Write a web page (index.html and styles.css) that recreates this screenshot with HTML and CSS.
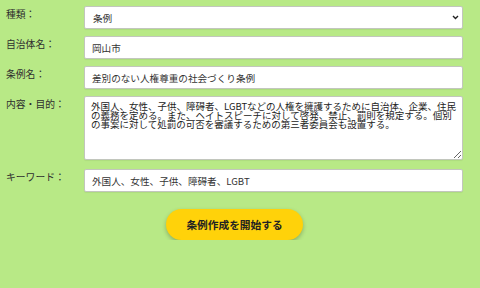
FILE: index.html
```html
<!DOCTYPE html>
<html lang="ja">
<head>
<meta charset="utf-8">
<title>条例作成</title>
<link rel="stylesheet" href="styles.css">
</head>
<body>
<form class="form">
  <div class="row">
    <label class="label">種類：</label>
    <div class="select-wrap">
      <select class="control select"><option>条例</option></select>
      <svg class="chev" width="7" height="5" viewBox="0 0 7 5"><path d="M1 1 L3.5 3.5 L6 1" fill="none" stroke="#222" stroke-width="1.4"/></svg>
    </div>
  </div>
  <div class="row">
    <label class="label">自治体名：</label>
    <input class="control" type="text" value="岡山市">
  </div>
  <div class="row">
    <label class="label">条例名：</label>
    <input class="control" type="text" value="差別のない人権尊重の社会づくり条例">
  </div>
  <div class="row">
    <label class="label">内容・目的：</label>
    <textarea class="control area">外国人、女性、子供、障碍者、LGBTなどの人権を擁護するために自治体、企業、住民の義務を定める。また、ヘイトスピーチに対して啓発、禁止、罰則を規定する。個別の事案に対して処罰の可否を審議するための第三者委員会も設置する。</textarea>
  </div>
  <div class="row row-key">
    <label class="label">キーワード：</label>
    <input class="control" type="text" value="外国人、女性、子供、障碍者、LGBT">
  </div>
  <div class="actions">
    <button class="submit" type="button">条例作成を開始する</button>
  </div>
</form>
</body>
</html>
```

FILE: styles.css
```css
body {
  margin: 0;
  background: #b8e986;
  font-family: "Noto Sans CJK JP", "Noto Sans", sans-serif;
  color: #333;
}
.form {
  display: flex;
  flex-direction: column;
  gap: 7px;
  padding: 6px 17px 0 6px;
}
.row {
  display: grid;
  grid-template-columns: 78px 1fr;
}
.row-key {
  margin-top: 2px;
}
.label {
  font-size: 9.8px;
  line-height: 14px;
  padding-top: 1px;
  color: #2e2e2e;
}
.control {
  display: block;
  width: 100%;
  box-sizing: border-box;
  height: 23px;
  margin: 0;
  padding: 0 7px;
  border: 1px solid #c2c6bd;
  border-radius: 2px;
  background: #fff;
  font-family: inherit;
  font-size: 9.6px;
  color: #333;
  box-shadow: 0 1px 1px rgba(0, 0, 0, 0.06);
}
.select-wrap {
  position: relative;
}
.select {
  appearance: none;
  -webkit-appearance: none;
  padding-left: 8px;
}
.chev {
  position: absolute;
  right: 4px;
  top: 9px;
}
.area {
  height: 64px;
  padding: 5px 4px 0 6px;
  font-size: 9.5px;
  line-height: 9px;
  color: #222;
  resize: vertical;
  overflow: hidden;
}
.actions {
  display: flex;
  justify-content: center;
  margin-top: 10px;
}
.submit {
  height: 31px;
  padding: 0 20px;
  border: none;
  border-radius: 16px;
  background: #ffd20a;
  color: #222;
  font-family: inherit;
  font-size: 10.7px;
  font-weight: bold;
  box-shadow: 0 2px 4px rgba(0, 0, 0, 0.25);
}
```
